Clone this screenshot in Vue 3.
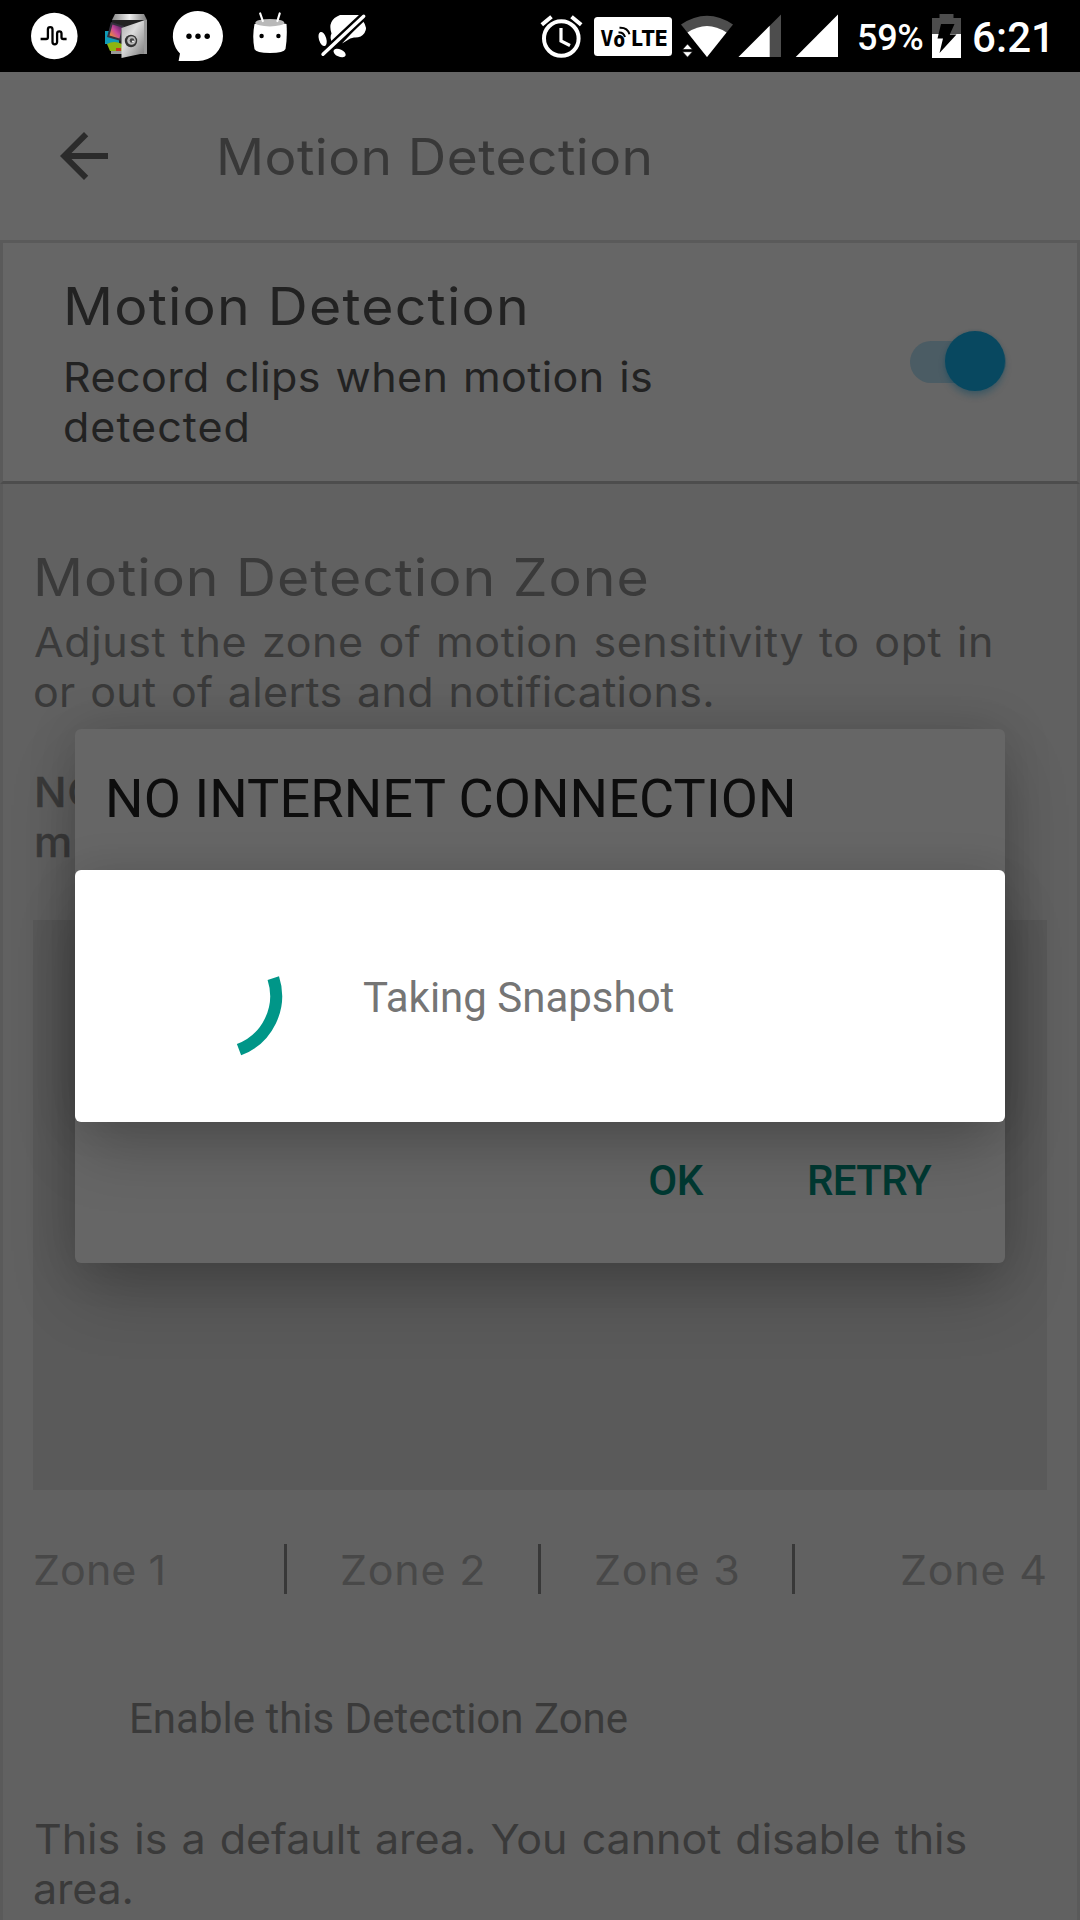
<script setup>
const zones = ['Zone 1', 'Zone 2', 'Zone 3', 'Zone 4']
</script>

<template>
  <div class="screen">
    <header class="status">
      <svg class="icons" width="400" height="72" viewBox="0 0 400 72">
        <!-- sound wave -->
        <circle cx="54.3" cy="36" r="23.3" fill="#fff" />
        <path d="M41 39h5.500q1.800 0 1.800-1.800V29.500a2.300 2.300 0 0 1 4.600 0V42a2.300 2.300 0 0 0 4.600 0V33.500a2.200 2.200 0 0 1 4.400 0V37.200q0 1.800 1.800 1.800H67" transform="translate(-.4 0)" fill="none" stroke="#000" stroke-width="2.300" />
        <!-- gallery safe -->
        <defs>
          <linearGradient id="top" x1="0" x2="1"><stop offset="0" stop-color="#888" /><stop offset=".5" stop-color="#eee" /><stop offset="1" stop-color="#777" /></linearGradient>
          <linearGradient id="door" x1="0" x2="1" y2="1"><stop offset="0" stop-color="#aaa" /><stop offset=".4" stop-color="#ddd" /><stop offset="1" stop-color="#777" /></linearGradient>
          <linearGradient id="photo" x1="0" y1="1" x2="1" y2="0"><stop offset="0" stop-color="#f6a01c" /><stop offset=".5" stop-color="#c8489a" /><stop offset="1" stop-color="#3d1b58" /></linearGradient>
        </defs>
        <path d="M115 14h29l3 6v34h-35V20z" fill="url(#top)" />
        <path d="M112 20h33v33h-33z" fill="#222" />
        <path d="M105 31h14v13h-14z" fill="#109cb8" />
        <path d="M107 44q7-4 15 0v7h-12z" fill="#8db512" />
        <path d="M111 51h11v3h-11z" fill="#999" />
        <path d="M116 48h5v3h-5z" fill="#c43b22" />
        <path d="M111 22l13 4-3 15-14-4z" fill="#34303d" />
        <path d="M112.500 24.500l9.500 3-2.500 11-10-3z" fill="url(#photo)" />
        <path d="M121.500 28L145 20v33l-23.500 5z" fill="url(#door)" />
        <path d="M144 20h3v34h-3z" fill="#999" />
        <circle cx="131" cy="41" r="6.200" fill="#333" />
        <circle cx="131.500" cy="40.500" r="4.300" fill="#bbb" />
        <circle cx="132" cy="40.500" r="2.300" fill="#444" />
        <circle cx="133" cy="41.500" r="1.100" fill="#eee" />
        <!-- chat bubble -->
        <path d="M198 11a25 25 0 1 1 0 50H178.600l1.400-7.500A25 25 0 0 1 198 11z" fill="#fff" />
        <g fill="#000"><circle cx="189" cy="36.300" r="2.700" /><circle cx="198" cy="36.300" r="2.700" /><circle cx="207.200" cy="36.300" r="2.700" /></g>
        <!-- marshmallow -->
        <path d="M254.500 24Q270 20 286.500 24Q287.500 37 285.500 49Q284 53 270 53T254.500 49Q252 37 254.500 24z" fill="#fff" />
        <ellipse cx="269.800" cy="22.700" rx="14.500" ry="3.700" fill="#b9b9b9" />
        <path d="M260.200 13.500L262.800 21M279.700 13.500L277.400 21" stroke="#fff" stroke-width="2.200" stroke-linecap="round" />
        <circle cx="261.600" cy="36" r="2.200" fill="#000" /><circle cx="278.400" cy="36" r="2.200" fill="#000" />
        <!-- crossed-out icon -->
        <g fill="#fff">
          <path d="M340 15h21L332 42.500Q329.500 37 331.500 33.500Q327 20 340 15z" />
          <path d="M363 21Q368 28 364.500 33Q361 38 354 37.500Q350 38 347 40.500L342 43.500z" />
          <ellipse cx="322.600" cy="39" rx="3.700" ry="7.300" transform="rotate(-17 322.600 39)" />
          <ellipse cx="339.600" cy="53" rx="6.500" ry="3.700" transform="rotate(25 339.600 53)" />
        </g>
        <path d="M320 57L367 13" stroke="#000" stroke-width="8" />
        <path d="M323 54.300L363.700 16.200" stroke="#fff" stroke-width="3.400" stroke-linecap="round" />
      </svg>

      <svg class="icons" width="324" height="72" viewBox="520 0 324 72">
        <!-- alarm -->
        <g fill="none" stroke="#fff">
          <circle cx="561.300" cy="38.500" r="17.300" stroke-width="4" />
          <path d="M561 28v13l9 4.500" stroke-width="3.200" />
          <path d="M541.800 24.800l9.700-8M581.200 24.800l-9.700-8" stroke-width="4" />
        </g>
        <!-- volte -->
        <rect x="594" y="17" width="78" height="39" rx="3.500" fill="#fff" />
        <text x="600.500" y="45.800" class="volte" textLength="12.800" lengthAdjust="spacingAndGlyphs">V</text>
        <text x="613.600" y="46.500" class="volte" textLength="11.500" lengthAdjust="spacingAndGlyphs">o</text>
        <text x="631.500" y="45.800" class="volte" textLength="36" lengthAdjust="spacingAndGlyphs">LTE</text>
        <path d="M618.500 32.500q5-.5 6.500 4.500M619.500 27.800q8-.5 10 6.500" fill="none" stroke="#000" stroke-width="2" />
        <!-- wifi -->
        <path d="M707 57L681 24.500Q707 7 733 24.500z" fill="#4d4d4d" />
        <path d="M707 57L687.500 32.500Q707 19.500 726.500 32.500z" fill="#fff" />
        <path d="M682.500 49.500h10l-5-5.500zM682.500 51.700h10l-5 5.500z" fill="#fff" stroke="#000" stroke-width=".6" />
        <!-- signal -->
        <path d="M738.500 57L781 14.500V57z" fill="#4d4d4d" />
        <path d="M738.500 57L769.700 25.800V57z" fill="#fff" />
        <path d="M795.700 57L838 14.500V57z" fill="#fff" />
      </svg>
      <span class="percent">59%</span>
      <svg class="battery" width="29" height="44" viewBox="0 0 29 44">
        <path d="M0 4h7.500V0h14v4H29v16H0z" fill="#4d4d4d" />
        <path d="M0 20h29v24H0z" fill="#fff" />
        <path d="M9 10h13.500l-4.700 10.500H24.500L7.500 39l3.500-14.500H5.500z" fill="#000" />
      </svg>
      <span class="clock">6:21</span>
    </header>

    <nav class="bar">
      <svg width="72" height="72" viewBox="0 0 24 24"><path d="M20 11H7.830l5.590-5.590L12 4l-8 8 8 8 1.410-1.410L7.830 13H20v-2z" fill="#2b2b2b" /></svg>
      <h1 class="bar-title">Motion Detection</h1>
    </nav>

    <section class="card">
      <div class="card-text">
        <h2 class="title card-title">Motion Detection</h2>
        <p class="copy card-copy"><span class="l1">Record clips when motion is</span><span class="l2">detected</span></p>
      </div>
      <div class="toggle"><div class="thumb"></div></div>
    </section>

    <main class="body">
      <h2 class="title zone-title">Motion Detection Zone</h2>
      <p class="copy zone-copy"><span class="l3">Adjust the zone of motion sensitivity to opt in</span><span class="l4">or out of alerts and notifications.</span></p>
      <p class="copy note"><span>NO</span><span>m</span></p>
      <div class="preview"></div>
      <div class="zones">
        <div v-for="(z, i) in zones" :key="z" class="zone" :class="'z' + (i + 1)"><span>{{ z }}</span></div>
      </div>
      <p class="enable">Enable this Detection Zone</p>
      <p class="copy default"><span class="l5">This is a default area. You cannot disable this</span><span class="l6">area.</span></p>
    </main>

    <div class="dialog offline">
      <h3>NO INTERNET CONNECTION</h3>
      <div class="actions"><span class="ok">OK</span><span class="retry">RETRY</span></div>
    </div>

    <div class="dialog progress">
      <svg width="144" height="144" viewBox="-72 -72 144 144">
        <path d="M54.300 -17.800A57.500 57.500 0 0 1 20 53.700" fill="none" stroke="#009688" stroke-width="12" />
      </svg>
      <span>Taking Snapshot</span>
    </div>
  </div>
</template>

<style>
body { margin: 0; }
</style>

<style scoped>
.screen {
  position: relative;
  display: flex;
  flex-direction: column;
  width: 1080px;
  height: 1920px;
  overflow: hidden;
  background: #666;
  font-family: Inter, sans-serif;
}
h1, h2, h3, p { margin: 0; font-weight: 400; white-space: nowrap; }
svg { display: block; flex: none; }

.status {
  display: flex;
  flex: none;
  height: 72px;
  background: #000;
  color: #fff;
  font-family: Roboto, sans-serif;
  font-weight: 500;
}
.status .icons + .icons { margin-left: 120px; }
.volte { font: 800 22px Inter, sans-serif; fill: #000; }
.percent { width: 75px; margin-left: 13px; font-size: 36px; line-height: 76px; letter-spacing: -.3px; }
.battery { margin-top: 14px; }
.clock { margin-left: 11px; font-size: 42px; line-height: 76px; letter-spacing: .1px; }

/* widened letterforms */
.bar-title, .title { width: max-content; transform: scaleX(1.065); transform-origin: 0 0; }
.copy span, .zone span { display: block; width: max-content; transform: scaleX(1.05); transform-origin: 0 0; }

.bar {
  display: flex;
  flex: none;
  align-items: center;
  height: 168px;
  padding-left: 48px;
}
.bar-title {
  margin: 2px 0 0 96px;
  color: #383838;
  font-size: 50px;
  line-height: 60px;
  letter-spacing: .42px;
}

.card {
  box-sizing: border-box;
  display: flex;
  flex: none;
  justify-content: space-between;
  height: 244px;
  padding: 34px 71px 0 60px;
  border: 3px solid #5a5a5a;
  border-bottom-color: #4d4d4d;
  color: #222;
}
.title { font-size: 52px; line-height: 60px; }
.copy { font-size: 41px; line-height: 50px; word-spacing: 2px; }
.card-title { letter-spacing: 1.14px; }
.card-copy { margin-top: 15px; }
.l1 { letter-spacing: .38px; }
.l2 { letter-spacing: .94px; }
.toggle {
  width: 96px;
  height: 42px;
  margin-top: 64px;
  border-radius: 21px;
  background: #4b5c64;
}
.thumb {
  width: 60px;
  height: 60px;
  margin: -10px 0 0 35px;
  border-radius: 50%;
  background: #084860;
  box-shadow: 0 5px 6px rgba(8, 72, 96, .35), 0 0 3px rgba(8, 72, 96, .3);
}
.card .toggle { display: flow-root; }
.card .thumb { position: relative; top: 0; }

.body {
  box-sizing: border-box;
  flex: 1;
  padding: 64px 30px 0;
  border: solid #5a5a5a;
  border-width: 0 3px;
  background: #616161;
  color: #3a3a3a;
}
.zone-title { letter-spacing: .92px; }
.zone-copy { margin-top: 9px; }
.l3 { margin-left: 1px; letter-spacing: .53px; }
.l4 { letter-spacing: .29px; }
.note { margin-top: 50px; padding-left: 1px; font-weight: 500; letter-spacing: .6px; -webkit-text-stroke: .3px #3a3a3a; }
.preview { height: 570px; margin-top: 53px; background: #5a5a5a; }
.zones { display: flex; margin-top: 54px; }
.zone {
  box-sizing: border-box;
  height: 50px;
  border-right: 3px solid #383838;
  color: #484848;
  font-size: 41px;
  line-height: 52px;
  letter-spacing: .7px;
  white-space: nowrap;
}
.z1 { width: 254px; letter-spacing: 0; }
.z2 { width: 254px; padding-left: 53px; }
.z3 { width: 254px; padding-left: 53px; }
.z4 { flex: 1; border-right: 0; padding-left: 105px; }
.enable {
  margin-top: 100px;
  padding-left: 96px;
  font: 400 42px/50px Roboto, sans-serif;
}
.default { margin-top: 70px; }
.l5 { margin-left: 1px; letter-spacing: -.06px; }
.l6 { letter-spacing: -.2px; }

.dialog {
  position: absolute;
  box-sizing: border-box;
  left: 75px;
  width: 930px;
  border-radius: 6px;
  font-family: Roboto, sans-serif;
}
.offline {
  top: 729px;
  height: 534px;
  padding: 40px 74px 42px 30px;
  display: flex;
  flex-direction: column;
  justify-content: space-between;
  background: #666;
  box-shadow: 0 32px 64px -6px rgba(0, 0, 0, .24), 0 0 50px rgba(0, 0, 0, .14);
}
.offline h3 { color: #0d0d0d; font-size: 54px; line-height: 60px; letter-spacing: .12px; }
.actions {
  display: flex;
  justify-content: flex-end;
  gap: 104px;
  color: #003932;
  font-size: 42px;
  font-weight: 500;
  line-height: 80px;
}
.ok { letter-spacing: -.4px; }
.retry { letter-spacing: -.65px; }
.progress {
  top: 870px;
  height: 252px;
  display: flex;
  align-items: center;
  padding-left: 72px;
  background: #fff;
  color: #757575;
  font-size: 42px;
  box-shadow: 0 34px 60px -8px rgba(0, 0, 0, .22), 0 0 44px rgba(0, 0, 0, .11);
}
.progress span { margin: 4px 0 0 72px; line-height: 50px; }
</style>
